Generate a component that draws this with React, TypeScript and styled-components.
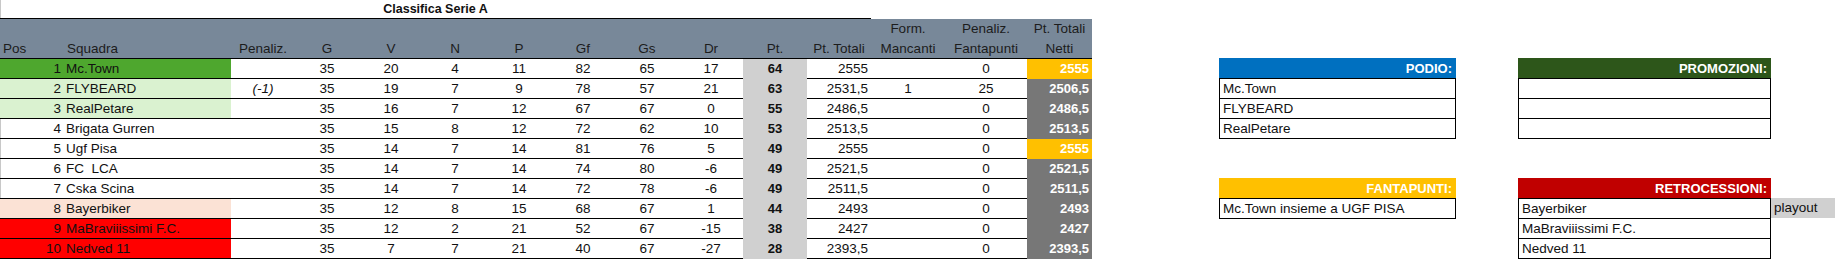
import styled, { createGlobalStyle } from "styled-components";

const GlobalStyle = createGlobalStyle`
  body {
    margin: 0;
    background: #ffffff;
    font-family: "Liberation Sans", Arial, sans-serif;
    color: #111111;
  }
`;

const COLS = "64px 167px 64px repeat(8, 64px) 64px 74px 82px 65px";

const Page = styled.div`
  display: flex;
  align-items: flex-start;
  width: 1835px;
  height: 259px;
  overflow: hidden;
`;

const Standings = styled.div`
  flex: none;
  width: 1092px;
  box-shadow: inset 1px 0 0 #c8c8c8;
`;

const Title = styled.div`
  width: 871px;
  height: 19px;
  border-bottom: 1px solid #000;
  box-sizing: border-box;
  text-align: center;
  font-weight: bold;
  font-size: 12.5px;
  line-height: 18px;
`;

const HeadRow = styled.div`
  display: grid;
  grid-template-columns: ${COLS};
  height: 40px;
  box-sizing: border-box;
  background: #788899;
  border-bottom: 1px solid #000;
`;

const HeadCell = styled.div<{ $align?: string }>`
  display: flex;
  flex-direction: column;
  justify-content: flex-end;
  align-items: ${(p) =>
    p.$align === "left" ? "flex-start" : p.$align === "right" ? "flex-end" : "center"};
  padding: 0 3px;
  font-size: 13.5px;
  line-height: 19.5px;
  color: #1c1c1c;
  white-space: nowrap;
`;

const Row = styled.div`
  display: grid;
  grid-template-columns: ${COLS};
  height: 20px;
`;

const Cell = styled.div<{
  $align?: string;
  $bg?: string;
  $bold?: boolean;
  $italic?: boolean;
  $color?: string;
  $noRule?: boolean;
}>`
  box-sizing: border-box;
  height: 20px;
  padding: 0 3px;
  background: ${(p) => p.$bg || "transparent"};
  border-bottom: 1px solid ${(p) => (p.$noRule ? "transparent" : "#000")};
  text-align: ${(p) => p.$align || "center"};
  font-size: ${(p) => (p.$bold ? "13px" : "13.5px")};
  font-weight: ${(p) => (p.$bold ? "bold" : "normal")};
  font-style: ${(p) => (p.$italic ? "italic" : "normal")};
  color: ${(p) => p.$color || "#111111"};
  line-height: 20px;
  white-space: pre;
  overflow: hidden;
`;

const NameCell = styled(Cell)`
  padding-left: 2px;
`;

const Side = styled.div`
  margin-left: 127px;
  padding-top: 58px;
  display: grid;
  grid-template-columns: 237px 317px;
  column-gap: 62px;
  row-gap: 39px;
`;

const Panel = styled.div``;

const PanelHead = styled.div<{ $bg: string; $w: number }>`
  width: ${(p) => p.$w}px;
  height: 20px;
  box-sizing: border-box;
  padding-right: 4px;
  background: ${(p) => p.$bg};
  color: #ffffff;
  font-weight: bold;
  font-size: 13px;
  line-height: 21px;
  text-align: right;
`;

const Item = styled.div<{ $w: number }>`
  flex: none;
  width: ${(p) => p.$w}px;
  height: 20px;
  box-sizing: border-box;
  border: 1px solid #000;
  border-bottom: none;
  padding-left: 3px;
  font-size: 13.5px;
  line-height: 19px;
  white-space: nowrap;
`;

const ListRow = styled.div`
  display: flex;
  &:last-child ${Item} {
    height: 21px;
    border-bottom: 1px solid #000;
  }
`;

const Note = styled.div`
  width: 64px;
  height: 20px;
  box-sizing: border-box;
  padding-left: 3px;
  background: #d0d0d0;
  font-size: 13.5px;
  line-height: 20px;
`;

type Team = {
  pos: number;
  name: string;
  bg?: string;
  pen?: string;
  stats: number[];
  pt: number;
  tot: string;
  form?: string;
  penF: string;
  net: string;
  gold?: boolean;
};

const GREEN = "#4ea72e";
const LIGHT_GREEN = "#daf2d0";
const SALMON = "#fbe2d5";
const RED = "#ff0000";

const teams: Team[] = [
  { pos: 1, name: "Mc.Town", bg: GREEN, stats: [35, 20, 4, 11, 82, 65, 17], pt: 64, tot: "2555", penF: "0", net: "2555", gold: true },
  { pos: 2, name: "FLYBEARD", bg: LIGHT_GREEN, pen: "(-1)", stats: [35, 19, 7, 9, 78, 57, 21], pt: 63, tot: "2531,5", form: "1", penF: "25", net: "2506,5" },
  { pos: 3, name: "RealPetare", bg: LIGHT_GREEN, stats: [35, 16, 7, 12, 67, 67, 0], pt: 55, tot: "2486,5", penF: "0", net: "2486,5" },
  { pos: 4, name: "Brigata Gurren", stats: [35, 15, 8, 12, 72, 62, 10], pt: 53, tot: "2513,5", penF: "0", net: "2513,5" },
  { pos: 5, name: "Ugf Pisa", stats: [35, 14, 7, 14, 81, 76, 5], pt: 49, tot: "2555", penF: "0", net: "2555", gold: true },
  { pos: 6, name: "FC  LCA", stats: [35, 14, 7, 14, 74, 80, -6], pt: 49, tot: "2521,5", penF: "0", net: "2521,5" },
  { pos: 7, name: "Cska Scina", stats: [35, 14, 7, 14, 72, 78, -6], pt: 49, tot: "2511,5", penF: "0", net: "2511,5" },
  { pos: 8, name: "Bayerbiker", bg: SALMON, stats: [35, 12, 8, 15, 68, 67, 1], pt: 44, tot: "2493", penF: "0", net: "2493" },
  { pos: 9, name: "MaBraviiissimi F.C.", bg: RED, stats: [35, 12, 2, 21, 52, 67, -15], pt: 38, tot: "2427", penF: "0", net: "2427" },
  { pos: 10, name: "Nedved 11", bg: RED, stats: [35, 7, 7, 21, 40, 67, -27], pt: 28, tot: "2393,5", penF: "0", net: "2393,5" },
];

const statHeads = ["G", "V", "N", "P", "Gf", "Gs", "Dr"];

type PanelData = { title: string; bg: string; w: number; items: { text: string; note?: string }[] };

const panels: PanelData[] = [
  { title: "PODIO:", bg: "#0070c0", w: 237, items: [{ text: "Mc.Town" }, { text: "FLYBEARD" }, { text: "RealPetare" }] },
  { title: "PROMOZIONI:", bg: "#2d561a", w: 253, items: [{ text: "" }, { text: "" }, { text: "" }] },
  { title: "FANTAPUNTI:", bg: "#ffc000", w: 237, items: [{ text: "Mc.Town insieme a UGF PISA" }] },
  {
    title: "RETROCESSIONI:",
    bg: "#c00000",
    w: 253,
    items: [{ text: "Bayerbiker", note: "playout" }, { text: "MaBraviiissimi F.C." }, { text: "Nedved 11" }],
  },
];

export default function App() {
  return (
    <>
      <GlobalStyle />
      <Page>
        <Standings>
          <Title>Classifica Serie A</Title>
          <HeadRow>
            <HeadCell $align="left">Pos</HeadCell>
            <HeadCell $align="left">Squadra</HeadCell>
            <HeadCell>Penaliz.</HeadCell>
            {statHeads.map((h) => (
              <HeadCell key={h}>{h}</HeadCell>
            ))}
            <HeadCell>Pt.</HeadCell>
            <HeadCell>Pt. Totali</HeadCell>
            <HeadCell>
              <span>Form.</span>
              <span>Mancanti</span>
            </HeadCell>
            <HeadCell>
              <span>Penaliz.</span>
              <span>Fantapunti</span>
            </HeadCell>
            <HeadCell>
              <span>Pt. Totali</span>
              <span>Netti</span>
            </HeadCell>
          </HeadRow>
          {teams.map((t) => (
            <Row key={t.pos}>
              <Cell $align="right" $bg={t.bg}>
                {t.pos}
              </Cell>
              <NameCell $align="left" $bg={t.bg}>
                {t.name}
              </NameCell>
              <Cell $italic>{t.pen || ""}</Cell>
              {t.stats.map((s, i) => (
                <Cell key={i}>{s}</Cell>
              ))}
              <Cell $bg="#d0d0d0" $bold $noRule>
                {t.pt}
              </Cell>
              <Cell $align="right">{t.tot}</Cell>
              <Cell>{t.form || ""}</Cell>
              <Cell>{t.penF}</Cell>
              <Cell $align="right" $bg={t.gold ? "#ffc000" : "#777777"} $bold $color="#ffffff" $noRule>
                {t.net}
              </Cell>
            </Row>
          ))}
        </Standings>
        <Side>
          {panels.map((p) => (
            <Panel key={p.title}>
              <PanelHead $bg={p.bg} $w={p.w}>
                {p.title}
              </PanelHead>
              {p.items.map((it, i) => (
                <ListRow key={i}>
                  <Item $w={p.w}>{it.text}</Item>
                  {it.note && <Note>{it.note}</Note>}
                </ListRow>
              ))}
            </Panel>
          ))}
        </Side>
      </Page>
    </>
  );
}
